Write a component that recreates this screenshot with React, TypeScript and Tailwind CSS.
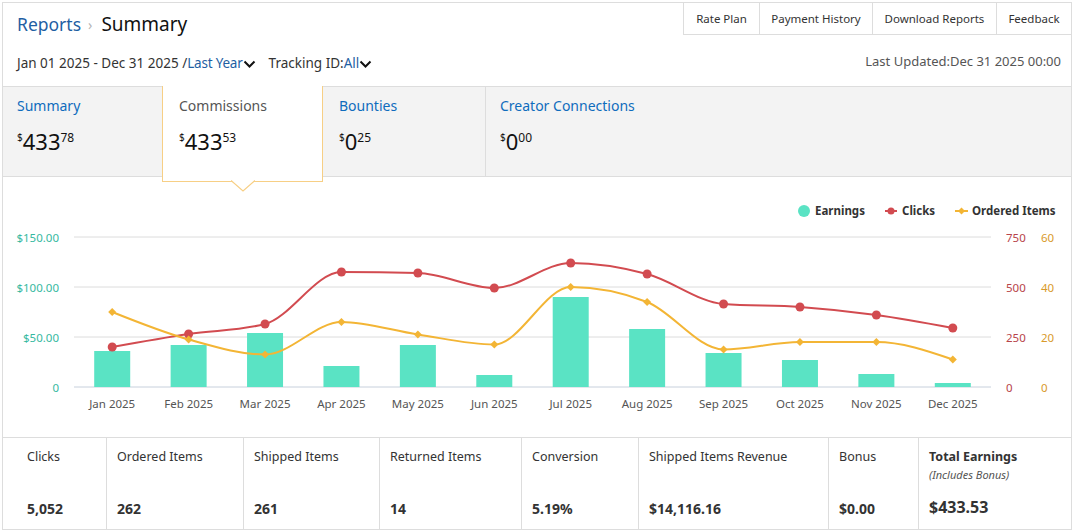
import React from "react";

const months = ["Jan", "Feb", "Mar", "Apr", "May", "Jun", "Jul", "Aug", "Sep", "Oct", "Nov", "Dec"];
const earnings = [36, 42, 54, 21, 42, 12, 90, 58, 34, 27, 13, 4];
const clicks = [200, 265, 315, 575, 570, 495, 620, 565, 415, 400, 360, 295];
const ordered = [30, 19, 13, 26, 21, 17, 40, 34, 15, 18, 18, 11];

// plot area in page coordinates (svg viewBox is offset to match)
const X0 = 74;
const X1 = 991;
const Y0 = 387; // zero line
const H = 150; // px for full scale
const step = (X1 - X0) / 12;
const cx = (i: number) => X0 + step * (i + 0.5);

type Pt = [number, number];

// monotone cubic, same idea as d3 curveMonotoneX
function monotone(pts: Pt[]) {
  const n = pts.length;
  const sec: number[] = [];
  for (let i = 0; i < n - 1; i++) sec.push((pts[i + 1][1] - pts[i][1]) / (pts[i + 1][0] - pts[i][0]));
  const m: number[] = new Array(n).fill(0);
  for (let i = 1; i < n - 1; i++) {
    const s0 = sec[i - 1];
    const s1 = sec[i];
    const h0 = pts[i][0] - pts[i - 1][0];
    const h1 = pts[i + 1][0] - pts[i][0];
    const p = (s0 * h1 + s1 * h0) / (h0 + h1);
    m[i] = (Math.sign(s0) + Math.sign(s1)) * Math.min(Math.abs(s0), Math.abs(s1), 0.5 * Math.abs(p)) || 0;
  }
  m[0] = (3 * sec[0] - m[1]) / 2;
  m[n - 1] = (3 * sec[n - 2] - m[n - 2]) / 2;
  let d = `M${pts[0][0]},${pts[0][1]}`;
  for (let i = 0; i < n - 1; i++) {
    const dx = (pts[i + 1][0] - pts[i][0]) / 3;
    d += ` C${pts[i][0] + dx},${pts[i][1] + dx * m[i]} ${pts[i + 1][0] - dx},${pts[i + 1][1] - dx * m[i + 1]} ${pts[i + 1][0]},${pts[i + 1][1]}`;
  }
  return d;
}

const TEAL = "#5ae3c4";
const RED = "#d24b50";
const GOLD = "#f3b535";

function Chart() {
  const clickPts: Pt[] = clicks.map((v, i) => [cx(i), Y0 - (v / 750) * H]);
  const orderPts: Pt[] = ordered.map((v, i) => [cx(i), Y0 - (v / 60) * H]);
  const grid = [0, 1, 2, 3];
  return (
    <svg width={1068} height={260} viewBox="3 177 1068 260" className="block">
      {/* legend */}
      <g fontSize="11.5" fontWeight="700" fill="#333">
        <circle cx={804} cy={211} r={6} fill={TEAL} />
        <text x={815} y={215}>Earnings</text>
        <line x1={885} y1={211} x2={897} y2={211} stroke={RED} strokeWidth={2} />
        <circle cx={891} cy={211} r={3.5} fill={RED} />
        <text x={902} y={215}>Clicks</text>
        <line x1={955} y1={211} x2={968} y2={211} stroke={GOLD} strokeWidth={2} />
        <path d="M961.5 207.5 L965 211 L961.5 214.5 L958 211 Z" fill={GOLD} />
        <text x={972} y={215}>Ordered Items</text>
      </g>

      {grid.map((g) => (
        <line
          key={g}
          x1={X0}
          x2={X1}
          y1={Y0 - g * 50}
          y2={Y0 - g * 50}
          stroke={g === 0 ? "#c7d0dc" : "#dcdcdc"}
          strokeWidth={1}
        />
      ))}

      <g fontSize="11.5">
        {["0", "$50.00", "$100.00", "$150.00"].map((t, g) => (
          <text key={t} x={59} y={Y0 - g * 50 + 4.5} textAnchor="end" fill="#36b99f">
            {t}
          </text>
        ))}
        {["0", "250", "500", "750"].map((t, g) => (
          <text key={t} x={1006} y={Y0 - g * 50 + 4.5} fill="#b8444a">
            {t}
          </text>
        ))}
        {["0", "20", "40", "60"].map((t, g) => (
          <text key={t} x={1041} y={Y0 - g * 50 + 4.5} fill="#d99a2b">
            {t}
          </text>
        ))}
        {months.map((mo, i) => (
          <text key={mo} x={cx(i)} y={407.5} textAnchor="middle" fill="#555">
            {mo} 2025
          </text>
        ))}
      </g>

      {earnings.map((v, i) => (
        <rect key={i} x={cx(i) - 18} y={Y0 - v} width={36} height={v} fill={TEAL} />
      ))}

      <path d={monotone(clickPts)} fill="none" stroke={RED} strokeWidth={2} />
      <path d={monotone(orderPts)} fill="none" stroke={GOLD} strokeWidth={2} />
      {clickPts.map(([x, y], i) => (
        <circle key={i} cx={x} cy={y} r={4.5} fill={RED} />
      ))}
      {orderPts.map(([x, y], i) => (
        <path key={i} d={`M${x} ${y - 4} L${x + 4} ${y} L${x} ${y + 4} L${x - 4} ${y} Z`} fill={GOLD} />
      ))}
    </svg>
  );
}

function Chevron() {
  return (
    <svg width="13" height="8" viewBox="0 0 13 8" className="mt-[2px]">
      <path d="M1.5 1.5 L6.5 6.5 L11.5 1.5" fill="none" stroke="#111" strokeWidth="2" />
    </svg>
  );
}

function Amount({ whole, cents }: { whole: string; cents: string }) {
  return (
    <div className="flex items-start text-[#111]">
      <span className="mt-[5px] text-[10px] leading-[10px]">$</span>
      <span className="text-[22px] leading-[28px]">{whole}</span>
      <span className="mt-[5px] text-[12px] leading-[12px]">{cents}</span>
    </div>
  );
}

const stats = [
  { label: "Clicks", value: "5,052", w: "w-[103px] pl-[24px]" },
  { label: "Ordered Items", value: "262", w: "w-[137px] border-l pl-[10px]" },
  { label: "Shipped Items", value: "261", w: "w-[136px] border-l pl-[10px]" },
  { label: "Returned Items", value: "14", w: "w-[142px] border-l pl-[10px]" },
  { label: "Conversion", value: "5.19%", w: "w-[117px] border-l pl-[10px]" },
  { label: "Shipped Items Revenue", value: "$14,116.16", w: "w-[190px] border-l pl-[10px]" },
  { label: "Bonus", value: "$0.00", w: "w-[90px] border-l pl-[10px]" },
];

export default function App() {
  return (
    <div className="min-h-[531px] bg-white pl-[2px] pt-[2px] font-['Noto_Sans',sans-serif]">
      <div className="flex h-[528px] w-[1070px] flex-col border border-[#dddddd]">
        {/* header */}
        <div className="flex h-[83px] justify-between">
          <div className="pl-[14px] pt-[7px]">
            <div className="flex h-[28px] items-center">
              <span className="text-[17.5px] text-[#1f5fa3]">Reports</span>
              <span className="ml-[7px] mr-[9px] text-[14px] text-[#b5b5b5]">›</span>
              <span className="text-[19px] text-[#111]">Summary</span>
            </div>
            <div className="mt-[15px] flex h-[20px] items-center text-[13.5px] text-[#333]">
              <span>Jan 01 2025 - Dec 31 2025 /</span>
              <span className="tracking-[-0.2px] text-[#1f5fa3]">Last Year</span>
              <Chevron />
              <span className="ml-[13px]">Tracking ID:</span>
              <span className="text-[#1f5fa3]">All</span>
              <Chevron />
            </div>
          </div>
          <div className="flex flex-col items-end">
            <div className="flex h-[32px] border-b border-[#dddddd] text-[11.5px] text-[#333]">
              {[
                ["Rate Plan", "w-[76px]"],
                ["Payment History", "w-[113px]"],
                ["Download Reports", "w-[124px]"],
                ["Feedback", "w-[75px]"],
              ].map(([t, w]) => (
                <div key={t} className={`flex items-center justify-center border-l border-[#dddddd] ${w}`}>
                  {t}
                </div>
              ))}
            </div>
            <div className="mt-[16px] h-[20px] pr-[10px] text-[13px] leading-[20px] text-[#555]">
              Last Updated:Dec 31 2025 00:00
            </div>
          </div>
        </div>

        {/* tabs */}
        <div className="flex h-[91px] border-y border-[#dddddd] bg-[#f3f3f3]">
          <div className="w-[159px] pl-[14px] pt-[9px]">
            <div className="h-[20px] text-[14px] leading-[20px] text-[#0f6cbd]">Summary</div>
            <div className="mt-[11px]">
              <Amount whole="433" cents="78" />
            </div>
          </div>
          <div className="relative z-10 -mt-px h-[96px] w-[161px] self-start border-x border-b border-[#f7cf85] bg-white pl-[16px] pt-[10px]">
            <div className="h-[20px] text-[14px] leading-[20px] text-[#555]">Commissions</div>
            <div className="mt-[11px]">
              <Amount whole="433" cents="53" />
            </div>
            <svg
              width="24"
              height="12"
              viewBox="0 0 24 12"
              className="absolute left-1/2 top-full -mt-px -translate-x-1/2"
            >
              <path d="M0 0.5 L12 11 L24 0.5 Z" fill="#fff" />
              <path d="M0 0.5 L12 11 L24 0.5" fill="none" stroke="#f7cf85" strokeWidth="1.2" />
            </svg>
          </div>
          <div className="w-[163px] border-r border-[#dddddd] pl-[16px] pt-[9px]">
            <div className="h-[20px] text-[14px] leading-[20px] text-[#0f6cbd]">Bounties</div>
            <div className="mt-[11px]">
              <Amount whole="0" cents="25" />
            </div>
          </div>
          <div className="flex-1 pl-[14px] pt-[9px]">
            <div className="h-[20px] text-[14px] leading-[20px] text-[#0f6cbd]">Creator Connections</div>
            <div className="mt-[11px]">
              <Amount whole="0" cents="00" />
            </div>
          </div>
        </div>

        {/* chart */}
        <div className="h-[260px]">
          <Chart />
        </div>

        {/* stats */}
        <div className="flex flex-1 border-t border-[#dddddd] text-[#333]">
          {stats.map((s) => (
            <div key={s.label} className={`flex flex-col justify-between border-[#dddddd] pb-[10px] pt-[9px] ${s.w}`}>
              <div className="text-[12.5px] leading-[20px]">{s.label}</div>
              <div className="text-[14px] font-bold leading-[20px]">{s.value}</div>
            </div>
          ))}
          <div className="flex flex-1 flex-col border-l border-[#dddddd] pb-[11px] pl-[10px] pt-[9px]">
            <div className="text-[12.5px] font-bold leading-[20px]">Total Earnings</div>
            <div className="text-[11px] italic leading-[16px] text-[#555]">(Includes Bonus)</div>
            <div className="mt-auto text-[16px] font-bold leading-[22px]">$433.53</div>
          </div>
        </div>
      </div>
    </div>
  );
}
